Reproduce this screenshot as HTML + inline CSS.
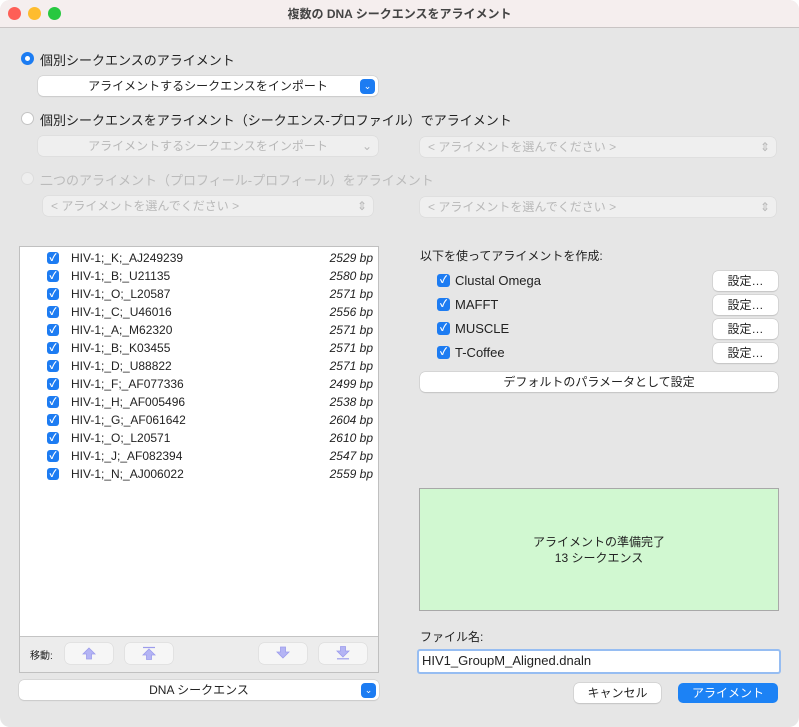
<!DOCTYPE html>
<html><head><meta charset="utf-8"><style>
*{box-sizing:border-box;margin:0;padding:0}
body{width:799px;height:727px;background:#fff;font-family:"Liberation Sans","Noto Sans CJK JP",sans-serif;font-size:12px;color:#222;position:relative;overflow:hidden}
.win{position:absolute;left:0;top:0;width:799px;height:727px;background:#e6e6e6;border-radius:10px;overflow:hidden}
.tb{position:absolute;left:0;top:0;width:799px;height:28px;background:#f5eeee;border-bottom:1px solid #c9c4c4;text-align:center;font-weight:bold;font-size:12px;line-height:28px;color:#444}
.dot{position:absolute;top:7px;width:13px;height:13px;border-radius:50%}
.a{position:absolute;white-space:nowrap}
.radio{position:absolute;width:13px;height:13px;border-radius:50%;background:#fff;border:1px solid #c4c4c4}
.pop{position:absolute;background:#fff;border-radius:5px;box-shadow:0 0 0 .5px #c8c8c8,0 1px 1px rgba(0,0,0,.12);text-align:center;line-height:20px;font-size:12px}
.dis{background:#efefef;color:#b8b8b8;box-shadow:0 0 0 .5px #d8d8d8}
.bl{position:absolute;right:3px;top:3px;width:15px;height:15px;border-radius:4px;background:#1c7cf2;color:#fff;font-size:9px;line-height:15px;text-align:center}
.cb{position:absolute;width:13px;height:13px;border-radius:3px;background:#1d7cf2;color:#fff;font-size:10px;line-height:13px;text-align:center;font-weight:bold}
.btn{position:absolute;background:#fff;border-radius:5px;box-shadow:0 0 0 .5px #c4c4c4,0 1px 1px rgba(0,0,0,.15);text-align:center;line-height:20px;font-size:12px}
.fb{position:absolute;top:643px;width:48px;height:21px;background:#f6f6f6;border-radius:5px;box-shadow:0 0 0 .5px #d8d8d8}
.fb svg{position:absolute;left:17px;top:3px}
.row{position:absolute;left:0;width:359px;height:18px;line-height:18px;font-size:12px}
.row .n{position:absolute;left:51px}
.row .b{position:absolute;right:6px;font-style:italic}
.row .cb{left:27px;top:3px;width:12px;height:12px}
</style></head><body><div class="win">
<div class="tb">複数の DNA シークエンスをアライメント</div>
<div class="dot" style="left:8px;background:#fe5f57"></div>
<div class="dot" style="left:28px;background:#febc2e"></div>
<div class="dot" style="left:48px;background:#28c840"></div>

<div class="radio" style="left:21px;top:52px;background:#1c7cf2;border-color:#1c7cf2"><div style="position:absolute;left:3px;top:3px;width:5px;height:5px;border-radius:50%;background:#fff"></div></div>
<div class="a" style="left:40px;top:50px;font-size:13px">個別シークエンスのアライメント</div>
<div class="pop" style="left:38px;top:76px;width:340px;height:20px">アライメントするシークエンスをインポート<div class="bl">⌄</div></div>

<div class="radio" style="left:21px;top:112px"></div>
<div class="a" style="left:40px;top:110px;font-size:13px">個別シークエンスをアライメント（シークエンス-プロファイル）でアライメント</div>
<div class="pop dis" style="left:38px;top:136px;width:340px;height:20px">アライメントするシークエンスをインポート<span style="position:absolute;right:6px">⌄</span></div>
<div class="pop dis" style="left:420px;top:137px;width:356px;height:20px;text-align:left;padding-left:8px">&lt; アライメントを選んでください &gt;<span style="position:absolute;right:6px">⇕</span></div>

<div class="radio" style="left:21px;top:172px;background:#eee;border-color:#ddd"></div>
<div class="a" style="left:40px;top:170px;font-size:13px;color:#bbb">二つのアライメント（プロフィール-プロフィール）をアライメント</div>
<div class="pop dis" style="left:43px;top:196px;width:330px;height:20px;text-align:left;padding-left:8px">&lt; アライメントを選んでください &gt;<span style="position:absolute;right:6px">⇕</span></div>
<div class="pop dis" style="left:420px;top:197px;width:356px;height:20px;text-align:left;padding-left:8px">&lt; アライメントを選んでください &gt;<span style="position:absolute;right:6px">⇕</span></div>

<div style="position:absolute;left:19px;top:246px;width:360px;height:427px;background:#fff;border:1px solid #c0c0c0">
<div class="row" style="top:2px"><div class="cb">✓</div><span class="n">HIV-1;_K;_AJ249239</span><span class="b">2529 bp</span></div>
<div class="row" style="top:20px"><div class="cb">✓</div><span class="n">HIV-1;_B;_U21135</span><span class="b">2580 bp</span></div>
<div class="row" style="top:38px"><div class="cb">✓</div><span class="n">HIV-1;_O;_L20587</span><span class="b">2571 bp</span></div>
<div class="row" style="top:56px"><div class="cb">✓</div><span class="n">HIV-1;_C;_U46016</span><span class="b">2556 bp</span></div>
<div class="row" style="top:74px"><div class="cb">✓</div><span class="n">HIV-1;_A;_M62320</span><span class="b">2571 bp</span></div>
<div class="row" style="top:92px"><div class="cb">✓</div><span class="n">HIV-1;_B;_K03455</span><span class="b">2571 bp</span></div>
<div class="row" style="top:110px"><div class="cb">✓</div><span class="n">HIV-1;_D;_U88822</span><span class="b">2571 bp</span></div>
<div class="row" style="top:128px"><div class="cb">✓</div><span class="n">HIV-1;_F;_AF077336</span><span class="b">2499 bp</span></div>
<div class="row" style="top:146px"><div class="cb">✓</div><span class="n">HIV-1;_H;_AF005496</span><span class="b">2538 bp</span></div>
<div class="row" style="top:164px"><div class="cb">✓</div><span class="n">HIV-1;_G;_AF061642</span><span class="b">2604 bp</span></div>
<div class="row" style="top:182px"><div class="cb">✓</div><span class="n">HIV-1;_O;_L20571</span><span class="b">2610 bp</span></div>
<div class="row" style="top:200px"><div class="cb">✓</div><span class="n">HIV-1;_J;_AF082394</span><span class="b">2547 bp</span></div>
<div class="row" style="top:218px"><div class="cb">✓</div><span class="n">HIV-1;_N;_AJ006022</span><span class="b">2559 bp</span></div>
<div style="position:absolute;left:0;top:389px;width:358px;height:36px;background:#ececec;border-top:1px solid #c4c4c4"></div>
</div>
<div class="a" style="left:30px;top:647px;font-size:10px">移動:</div>
<div class="fb" style="left:65px"><svg width="14" height="14"><path d="M7 2L13 8H9.5V13H4.5V8H1Z" fill="#b4b4f4" stroke="#9c9cec" stroke-width=".8"/></svg></div>
<div class="fb" style="left:125px"><svg width="14" height="14"><path d="M1 1.5H13" stroke="#9c9cec" stroke-width="1.2"/><path d="M7 3L13 9H9.5V13.5H4.5V9H1Z" fill="#b4b4f4" stroke="#9c9cec" stroke-width=".8"/></svg></div>
<div class="fb" style="left:259px"><svg width="14" height="14"><path d="M7 12L13 6H9.5V1H4.5V6H1Z" fill="#b4b4f4" stroke="#9c9cec" stroke-width=".8"/></svg></div>
<div class="fb" style="left:319px"><svg width="14" height="14"><path d="M1 12.8H13" stroke="#9c9cec" stroke-width="1.2"/><path d="M7 11L13 5H9.5V.5H4.5V5H1Z" fill="#b4b4f4" stroke="#9c9cec" stroke-width=".8"/></svg></div>
<div class="pop" style="left:19px;top:680px;width:360px;height:20px">DNA シークエンス<div class="bl">⌄</div></div>

<div class="a" style="left:420px;top:247px">以下を使ってアライメントを作成:</div>
<div class="cb" style="left:437px;top:274px">✓</div><div class="a" style="left:455px;top:273px;font-size:13px">Clustal Omega</div>
<div class="cb" style="left:437px;top:298px">✓</div><div class="a" style="left:455px;top:297px;font-size:13px">MAFFT</div>
<div class="cb" style="left:437px;top:322px">✓</div><div class="a" style="left:455px;top:321px;font-size:13px">MUSCLE</div>
<div class="cb" style="left:437px;top:346px">✓</div><div class="a" style="left:455px;top:345px;font-size:13px">T-Coffee</div>
<div class="btn" style="left:713px;top:271px;width:65px;height:20px">設定…</div>
<div class="btn" style="left:713px;top:295px;width:65px;height:20px">設定…</div>
<div class="btn" style="left:713px;top:319px;width:65px;height:20px">設定…</div>
<div class="btn" style="left:713px;top:343px;width:65px;height:20px">設定…</div>
<div class="btn" style="left:420px;top:372px;width:358px;height:20px">デフォルトのパラメータとして設定</div>

<div style="position:absolute;left:419px;top:488px;width:360px;height:123px;background:#d1f8d1;border:1px solid #a8a8a8;text-align:center;padding-top:45px;line-height:16px">アライメントの準備完了<br>13 シークエンス</div>

<div class="a" style="left:420px;top:628px">ファイル名:</div>
<div style="position:absolute;left:417px;top:649px;width:364px;height:25px;background:#fff;border:2.5px solid #96bdf2;border-radius:3px;font-size:13px;line-height:20px;padding-left:3px">HIV1_GroupM_Aligned.dnaln</div>
<div class="btn" style="left:574px;top:683px;width:87px;height:20px">キャンセル</div>
<div class="btn" style="left:678px;top:683px;width:100px;height:20px;background:#1c82f5;color:#fff;box-shadow:none">アライメント</div>
</div></body></html>
